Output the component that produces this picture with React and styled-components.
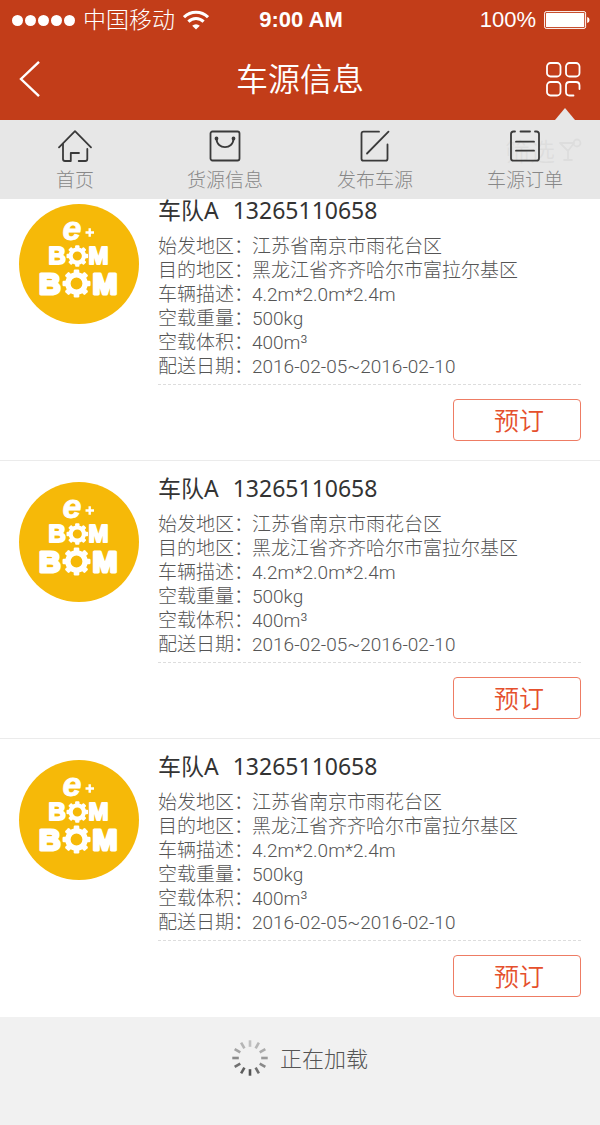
import React from 'react';
import styled, { createGlobalStyle } from 'styled-components';

const GlobalStyle = createGlobalStyle`
  * {
    box-sizing: border-box;
  }

  body {
    margin: 0;
    background-color: #f1f1f1;
    font-family: 'Noto Sans', 'Noto Sans CJK SC', sans-serif;
  }
`;

const Header = styled.header`
  background-color: #c23d19;
  color: white;
`;

const StatusBar = styled.div`
  display: grid;
  grid-template-columns: 1fr auto 1fr;
  align-items: center;
  height: 40px;
  padding: 0 10px 0 12px;
  font-family: 'Liberation Sans', 'Noto Sans CJK SC', sans-serif;
  font-size: 22px;
`;

const StatusGroup = styled.div`
  display: flex;
  align-items: center;
  justify-content: ${props => (props.$end ? 'flex-end' : 'flex-start')};
  gap: 8px;
`;

const Carrier = styled.span`
  font-size: 23px;
  font-weight: 300;
  line-height: 32px;
`;

const Signal = styled.div`
  display: flex;
  gap: 2px;
`;

const Dot = styled.i`
  width: 11px;
  height: 11px;
  border-radius: 50%;
  background-color: white;
`;

const Time = styled.span`
  font-weight: bold;
`;

const TitleBar = styled.div`
  display: grid;
  grid-template-columns: 1fr auto 1fr;
  align-items: center;
  height: 80px;
  padding: 0 19px 2px;
`;

const Title = styled.h1`
  margin: 0;
  font-size: 32px;
  font-weight: 350;
  line-height: 48px;
`;

const IconButton = styled.button`
  display: flex;
  justify-self: ${props => (props.$end ? 'end' : 'start')};
  padding: 0;
  border: none;
  background: none;
  color: inherit;
  cursor: pointer;
`;

const Content = styled.div`
  position: relative;
`;

const Menu = styled.nav`
  position: absolute;
  top: 0;
  left: 0;
  right: 0;
  background-color: rgba(229, 229, 229, 0.93);

  &::before {
    content: '';
    position: absolute;
    right: 25px;
    bottom: 100%;
    border: solid transparent;
    border-width: 0 10px 12px;
    border-bottom-color: #e7e7e7;
  }
`;

const MenuList = styled.ul`
  display: grid;
  grid-template-columns: repeat(4, 1fr);
  margin: 0;
  padding: 10px 0 5px;
  list-style-type: none;
`;

const MenuLink = styled.a`
  display: flex;
  flex-direction: column;
  align-items: center;
  gap: 4px;
  color: #888;
  font-size: 19px;
  font-weight: 300;
  line-height: 28px;
  text-decoration: none;

  svg {
    color: #3a3a3a;
  }
`;

const FilterBar = styled.div`
  display: flex;
  justify-content: flex-end;
  height: 63px;
  padding: 0 18px 4px;
  background-color: white;
`;

const FilterButton = styled.button`
  display: flex;
  align-items: center;
  gap: 4px;
  padding: 0;
  border: none;
  background: none;
  color: #777;
  font-family: inherit;
  font-size: 25px;
  font-weight: 350;
`;

const List = styled.ul`
  margin: 0;
  padding: 0;
  list-style-type: none;
`;

const Card = styled.li`
  display: flex;
  align-items: flex-start;
  gap: 19px;
  padding: 21px 19px 19px;
  border-bottom: 1px solid #ebebeb;
  background-color: white;

  &:last-child {
    border-bottom-color: white;
  }
`;

const Info = styled.div`
  flex: 1;
  min-width: 0;
`;

const Name = styled.h2`
  display: flex;
  gap: 14px;
  margin: -10px 0 9px;
  color: #333;
  font-size: 23px;
  font-weight: 400;
  line-height: 32px;
`;

const Details = styled.dl`
  margin: 0;
  padding-bottom: 5px;
  border-bottom: 1px dashed #ddd;
  color: #555;
  font-family: Roboto, 'Noto Sans CJK SC', sans-serif;
  font-size: 19px;
  font-weight: 300;
`;

const Detail = styled.div`
  display: flex;
  height: 24px;
  line-height: 24px;

  dt {
    flex: none;
    width: 94px;
    white-space: nowrap;
  }

  dd {
    margin: 0;
    white-space: nowrap;
  }
`;

const BookButton = styled.button`
  display: block;
  width: 128px;
  height: 42px;
  margin: 14px 0 0 auto;
  padding: 0 0 0 4px;
  border: 1px solid #ee7c64;
  border-radius: 4px;
  background-color: white;
  color: #e5502d;
  font-family: inherit;
  font-size: 25px;
  font-weight: 350;
  line-height: 40px;
  cursor: pointer;
`;

const Loading = styled.div`
  display: flex;
  align-items: center;
  justify-content: center;
  gap: 12px;
  padding: 23px 0 48px;
  color: #555;
  font-size: 22px;
  font-weight: 300;
  line-height: 34px;
`;

const line = {
  fill: 'none',
  stroke: 'currentColor',
  strokeWidth: 1.8,
  strokeLinecap: 'round',
  strokeLinejoin: 'round',
};

const WifiIcon = () => (
  <svg width="26" height="20" viewBox="0 0 26 20" fill="none" stroke="currentColor" strokeWidth="3">
    <path d="M1 7.2a17 17 0 0 1 24 0" />
    <path d="M5.4 11.6a10.8 10.8 0 0 1 15.2 0" />
    <path d="M13 19.6l-3.8-3.9a5.4 5.4 0 0 1 7.6 0z" fill="currentColor" stroke="none" />
  </svg>
);

const BatteryIcon = () => (
  <svg width="46" height="18" viewBox="0 0 46 18">
    <rect x="0.6" y="0.6" width="41" height="16.8" rx="1.6" fill="none" stroke="currentColor" strokeWidth="1" />
    <rect x="2" y="2" width="38.2" height="14" rx="0.6" fill="currentColor" />
    <path d="M43.2 6c3 .6 3 5.4 0 6z" fill="currentColor" />
  </svg>
);

const BackIcon = () => (
  <svg width="22" height="38" viewBox="0 0 22 38" fill="none" stroke="currentColor" strokeWidth="2.4">
    <path d="M20 1.8L2 19l18 17.2" />
  </svg>
);

const GridIcon = () => (
  <svg width="35" height="35" viewBox="0 0 35 35" {...line}>
    <rect x="1" y="1" width="13.5" height="13.5" rx="3.5" />
    <rect x="20" y="1" width="13.5" height="13.5" rx="3.5" />
    <rect x="1" y="20" width="13.5" height="13.5" rx="3.5" />
    <path d="M27.5 33.5h-4q-3.5 0-3.5-3.5v-6.5q0-3.5 3.5-3.5H30q3.5 0 3.5 3.5v3.5" />
  </svg>
);

const HomeIcon = () => (
  <svg width="34" height="32" viewBox="0 0 34 32" {...line}>
    <path d="M1 17.3L17 1.2l16 16.1" />
    <path d="M5 14v15q0 2 2 2h5.8v-8H21" />
    <path d="M29.3 19v10q0 2-2 2h-6.6" />
  </svg>
);

const BagIcon = () => (
  <svg width="32" height="32" viewBox="0 0 32 32" {...line}>
    <rect x="1.5" y="1.5" width="29" height="29" rx="2" />
    <path d="M7.5 8.5c0 11.5 17 11.5 17 0" />
    <circle cx="7.5" cy="8.5" r="1" fill="currentColor" />
    <circle cx="24.5" cy="8.5" r="1" fill="currentColor" />
  </svg>
);

const EditIcon = () => (
  <svg width="30" height="32" viewBox="0 0 30 32" {...line}>
    <path d="M19 1.7H3.5q-2 0-2 2v25q0 2 2 2h22q2 0 2-2V14.5" />
    <path d="M28.5 1.7L7 23.5" />
  </svg>
);

const OrderIcon = () => (
  <svg width="30" height="32" viewBox="0 0 30 32" {...line}>
    <path d="M5 1.500H3.500Q1 1.500 1 4v24.200q0 2.500 2.500 2.500h23q2.500 0 2.500-2.500V4q0-2.500-2.500-2.500H25" />
    <path d="M10.500 1.500h9.500M6 11.700h18M6 20.700h18" />
  </svg>
);

const FilterIcon = () => (
  <svg width="23" height="24" viewBox="0 0 23 24" {...line}>
    <path d="M1 5h14L9 13v9M9 13L1 5M5 22h8" />
    <circle cx="18" cy="5" r="3.5" />
  </svg>
);

const Gear = ({ x, y, r }) => (
  <g transform={`translate(${x} ${y}) scale(${r / 14})`}>
    <circle r="8.6" fill="none" stroke="white" strokeWidth="5.4" />
    {[0, 45, 90, 135, 180, 225, 270, 315].map(angle => (
      <rect key={angle} x="-2.8" y="-14" width="5.6" height="5" rx="1.2" fill="white" transform={`rotate(${angle})`} />
    ))}
  </g>
);

const Logo = () => (
  <svg
    width="120"
    height="120"
    viewBox="0 0 120 120"
    fill="white"
    stroke="white"
    strokeLinejoin="round"
    fontFamily="'Liberation Sans', sans-serif"
    fontWeight="bold"
  >
    <circle cx="60" cy="60" r="60" fill="#f6b908" stroke="none" />
    <text x="43.5" y="36" fontSize="34" fontStyle="italic" strokeWidth="0.8">e</text>
    <path d="M66.5 28.5h8.500M70.700 24.300v8.500" strokeWidth="2.4" />
    <g fontSize="24" strokeWidth="2">
      <text x="29.5" y="60">B</text>
      <text x="69.5" y="60">M</text>
    </g>
    <g fontSize="30" strokeWidth="3">
      <text x="20" y="90">B</text>
      <text x="73.5" y="90">M</text>
    </g>
    <g stroke="none">
      <Gear x={58.3} y={52} r={10.8} />
      <Gear x={57.5} y={79.5} r={14} />
    </g>
  </svg>
);

const Spinner = () => (
  <svg width="36" height="36" viewBox="-18 -18 36 36">
    {[0.28, 0.33, 0.4, 0.5, 0.6, 0.75, 0.9, 0.85, 0.75, 0.6, 0.45, 0.35].map((opacity, i) => (
      <rect
        key={i}
        x="-1.3"
        y="-17.7"
        width="2.6"
        height="6.5"
        fill="#444"
        opacity={opacity}
        transform={`rotate(${i * 30})`}
      />
    ))}
  </svg>
);

const menuItems = [
  { label: '首页', icon: <HomeIcon /> },
  { label: '货源信息', icon: <BagIcon /> },
  { label: '发布车源', icon: <EditIcon /> },
  { label: '车源订单', icon: <OrderIcon /> },
];

const details = [
  ['始发地区', '江苏省南京市雨花台区'],
  ['目的地区', '黑龙江省齐齐哈尔市富拉尔基区'],
  ['车辆描述', '4.2m*2.0m*2.4m'],
  ['空载重量', '500kg'],
  ['空载体积', '400m³'],
  ['配送日期', '2016-02-05~2016-02-10'],
];

const trucks = [1, 2, 3].map(id => ({ id, name: '车队A', phone: '13265110658', details }));

const TruckCard = ({ truck }) => (
  <Card>
    <Logo />
    <Info>
      <Name>
        <span>{truck.name}</span>
        <span>{truck.phone}</span>
      </Name>
      <Details>
        {truck.details.map(([label, value]) => (
          <Detail key={label}>
            <dt>{label}：</dt>
            <dd>{value}</dd>
          </Detail>
        ))}
      </Details>
      <BookButton type="button">预订</BookButton>
    </Info>
  </Card>
);

const App = () => {
  return (
    <>
      <GlobalStyle />
      <Header>
        <StatusBar>
          <StatusGroup>
            <Signal>
              {[1, 2, 3, 4, 5].map(n => <Dot key={n} />)}
            </Signal>
            <Carrier>中国移动</Carrier>
            <WifiIcon />
          </StatusGroup>
          <Time>9:00 AM</Time>
          <StatusGroup $end>
            <span>100%</span>
            <BatteryIcon />
          </StatusGroup>
        </StatusBar>
        <TitleBar>
          <IconButton type="button" aria-label="返回"><BackIcon /></IconButton>
          <Title>车源信息</Title>
          <IconButton type="button" aria-label="菜单" $end><GridIcon /></IconButton>
        </TitleBar>
      </Header>
      <Content>
        <FilterBar>
          <FilterButton type="button">筛选<FilterIcon /></FilterButton>
        </FilterBar>
        <List>
          {trucks.map(truck => <TruckCard key={truck.id} truck={truck} />)}
        </List>
        <Menu>
          <MenuList>
            {menuItems.map(item => (
              <li key={item.label}>
                <MenuLink href="#">{item.icon}{item.label}</MenuLink>
              </li>
            ))}
          </MenuList>
        </Menu>
      </Content>
      <Loading>
        <Spinner />
        正在加载
      </Loading>
    </>
  );
};

export default App;
